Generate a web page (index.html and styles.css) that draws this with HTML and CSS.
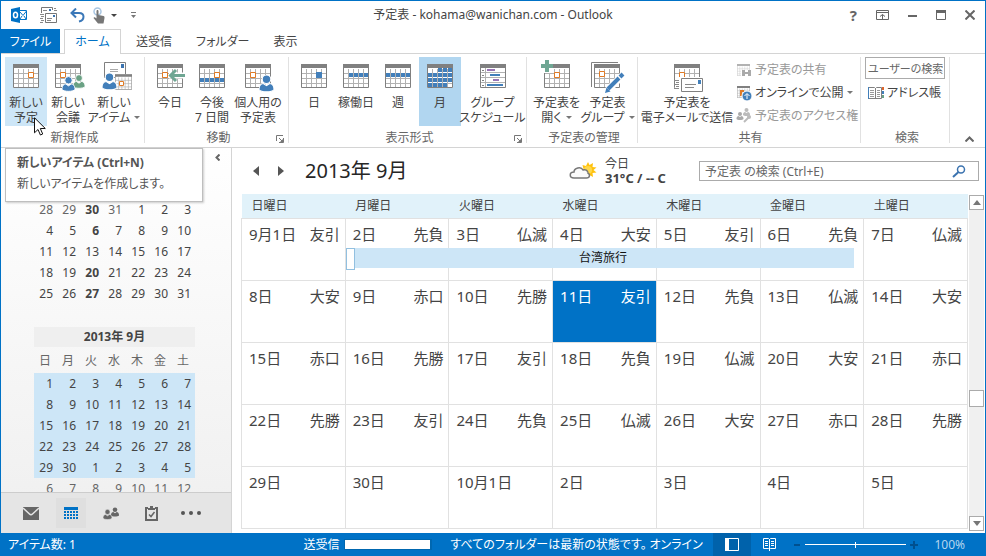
FILE: index.html
```html
<!DOCTYPE html>
<html lang="ja">
<head>
<meta charset="utf-8">
<title>予定表 - Outlook</title>
<link rel="stylesheet" href="styles.css">
</head>
<body>
<svg class="defs" aria-hidden="true">
  <symbol id="cal" viewBox="0 0 26 24">
    <path fill="#fff" d="M0 0h26v24H0z"/>
    <path stroke="#b1b1b1" fill="none" d="M5.5 5v18M10.5 5v18M15.5 5v18M20.5 5v18M1 9.5h24M1 14.5h24M1 19.5h24"/>
    <path stroke="#808080" fill="none" d="M.5 3v20.500h25V3"/>
    <path fill="#808080" d="M0 0h26v4H0z"/>
  </symbol>
  <symbol id="person" viewBox="0 0 14 16">
    <circle cx="7" cy="4" r="4"/><path d="M0 13c0-3 2-5 4-5l3 2 3-2c2 0 4 2 4 5v1c-2 2.500-12 2.500-14 0z"/>
  </symbol>
  <symbol id="launch" viewBox="0 0 8 8">
    <path fill="none" stroke="#777" d="M.5 6V.5H7M3 3l3 3M7.500 3v4.500H3"/><path fill="#777" d="M7 4v3H4z"/>
  </symbol>
</svg>
<div class="window">
  <header class="titlebar">
    <div class="quick">
      <svg width="16" height="16" viewBox="0 0 16 16"><path fill="#fff" stroke="#0072c6" d="M8 3.500h7.500v9H8"/><path fill="none" stroke="#0072c6" d="M9 5l3 3.500L15.500 4M9 12l2-3M15 12l-2-3"/><path fill="#0072c6" d="M0 2l9-2v16l-9-2z"/><ellipse cx="4.500" cy="8" rx="2" ry="2.800" fill="none" stroke="#fff" stroke-width="1.500"/></svg>
      <button class="plain" aria-label="すべてのフォルダーを送受信"><svg width="17" height="17" viewBox="0 0 17 17"><path fill="#fff" stroke="#777" d="M1.500 6V.5h11V3M5.500 6.500h11v9h-11z"/><path stroke="#888" d="M3 3.500h4M0 7.500h4M1 9.500h3M0 11.500h3M1 13.500h3M0 15.500h3M14 1.500h2M14 3.500h3M7 11.500h5M7 13.500h4"/><path fill="#3b73af" d="M9 2h2v2H9zM13 8h2v2h-2z"/></svg></button>
      <button class="plain" aria-label="元に戻す"><svg width="15" height="15" viewBox="0 0 15 15"><path fill="none" stroke="#3b78b8" stroke-width="2" d="M1.500 5H9c6 0 6 7 0 8.500M6 .5L1.500 5 6 9.500"/></svg></button>
      <button class="plain touch" aria-label="タッチ/マウス モードの切り替え"><svg width="13" height="17" viewBox="0 0 13 17"><circle cx="4.500" cy="4.500" r="3.500" fill="none" stroke="#a9c6e2" stroke-width="1.500"/><path fill="#777" d="M3.500 4c0-1.500 2-1.500 2 0v4l5 1c1 .3 1 1 1 2l-1 5.500H5L.5 11c.5-1.500 2-.5 3 .5z"/></svg><i class="caret dark"></i></button>
      <button class="plain custom" aria-label="クイック アクセス ツール バーのカスタマイズ"><svg width="5" height="6" viewBox="0 0 5 6"><path fill="#777" d="M0 0h5v1H0zM0 3h5L2.500 6z"/></svg></button>
    </div>
    <h1>予定表 - kohama@wanichan.com - Outlook</h1>
    <div class="winbtns">
      <button class="plain help" aria-label="ヘルプ">?</button>
      <button class="plain" aria-label="リボンの表示オプション"><svg width="13" height="10" viewBox="0 0 13 10"><path fill="none" stroke="#666" d="M.5.5h12v9H.500zM1 2.500h11M6.500 9V4.500M4 6.500l2.500-2L9 6.500"/></svg></button>
      <button class="plain" aria-label="最小化"><svg width="9" height="10" viewBox="0 0 9 10"><path fill="#666" d="M0 5h9v2H0z"/></svg></button>
      <button class="plain" aria-label="最大化"><svg width="10" height="10" viewBox="0 0 10 10"><path fill="none" stroke="#666" d="M.5 1v8.500h9V1"/><path fill="#666" d="M0 0h10v3H0z"/></svg></button>
      <button class="plain" aria-label="閉じる"><svg width="10" height="10" viewBox="0 0 10 10"><path stroke="#666" stroke-width="2" d="M.5.5l9 9M9.500.5l-9 9"/></svg></button>
    </div>
  </header>

  <nav class="tabs">
    <button class="tab file">ファイル</button>
    <button class="tab active">ホーム</button>
    <button class="tab">送受信</button>
    <button class="tab">フォルダー</button>
    <button class="tab">表示</button>
  </nav>

  <section class="ribbon">
    <div class="group g-new">
      <div class="tools">
        <button class="big hover"><svg width="38" height="34"><use href="#cal" x="6" y="4" width="26" height="24"/><path fill="#fff" stroke="#e07b26" d="M21.500 12.500h5v5h-5z"/></svg><span>新しい<br>予定</span></button>
        <button class="big"><svg width="38" height="34"><use href="#cal" x="6" y="4" width="26" height="24"/><path fill="#fff" stroke="#e07b26" d="M11.500 12.500h5v5h-5z"/><g stroke="#fff" stroke-width="1"><use href="#person" x="24" y="14" width="12" height="15" fill="#6aa184"/><use href="#person" x="13" y="16" width="13" height="16" fill="#427fba"/></g></svg><span>新しい<br>会議</span></button>
        <button class="big item"><svg width="38" height="34"><path fill="#fff" stroke="#808080" d="M9.500 2.500h21v15h-21z"/><path fill="#3b73af" d="M26 4h3v4h-3z"/><path stroke="#aaa" d="M15 9.500h8M15 11.500h8"/><use href="#cal" x="20" y="14" width="17" height="16"/><path fill="#fff" stroke="#e07b26" d="M24.500 21.500h4v4h-4z"/><use href="#person" x="7" y="13" width="15" height="17" fill="#427fba" stroke="#fff"/></svg><span>新しい<br>アイテム<i class="caret"></i></span></button>
      </div>
      <h2>新規作成</h2>
    </div>
    <div class="group g-move">
      <div class="tools">
        <button class="big"><svg width="38" height="34"><use href="#cal" x="6" y="4" width="26" height="24"/><path fill="#fff" stroke="#e07b26" d="M11.500 12.500h5v5h-5z"/><path stroke="#fff" stroke-width="6" d="M18 15.500h17"/><path fill="none" stroke="#6fa693" stroke-width="3" d="M34 15.500H20M25 10l-5.500 5.500L25 21"/></svg><span>今日</span></button>
        <button class="big"><svg width="38" height="34"><use href="#cal" x="6" y="4" width="26" height="24"/><path fill="#fff" stroke="#e07b26" d="M21.500 12.500h5v5h-5z"/><path stroke="#427fba" stroke-width="4" stroke-dasharray="4 1" d="M7 20h25"/></svg><span>今後<br>7 日間</span></button>
        <button class="big own"><svg width="38" height="34"><use href="#cal" x="6" y="4" width="26" height="24"/><path fill="#fff" stroke="#e07b26" d="M11.500 12.500h5v5h-5z"/><use href="#person" x="20" y="15" width="15" height="17" fill="#427fba" stroke="#fff"/></svg><span>個人用の<br>予定表</span></button>
      </div>
      <h2>移動</h2>
      <button class="plain launcher" aria-label="移動の詳細"><svg width="8" height="8"><use href="#launch"/></svg></button>
    </div>
    <div class="group g-view">
      <div class="tools">
        <button class="big"><svg width="38" height="34"><use href="#cal" x="6" y="4" width="26" height="24"/><path fill="#427fba" d="M21 12h6v6h-6z"/></svg><span>日</span></button>
        <button class="big"><svg width="38" height="34"><use href="#cal" x="6" y="4" width="26" height="24"/><path stroke="#427fba" stroke-width="4" stroke-dasharray="4 1" d="M12 15h19"/></svg><span>稼働日</span></button>
        <button class="big"><svg width="38" height="34"><use href="#cal" x="6" y="4" width="26" height="24"/><path stroke="#427fba" stroke-width="4" stroke-dasharray="4 1" d="M7 15h24"/></svg><span>週</span></button>
        <button class="big on"><svg width="38" height="34"><use href="#cal" x="6" y="4" width="26" height="24"/><path stroke="#427fba" stroke-width="4" stroke-dasharray="4 1" d="M17 10h14M7 15h24M7 20h24M7 25h19"/></svg><span>月</span></button>
        <button class="big sched"><svg width="38" height="34"><path fill="#fff" stroke="#808080" d="M6.500 5v22.500h25V5"/><path fill="#808080" d="M6 4h26v4H6z"/><path stroke="#b1b1b1" d="M11.500 8v19M7 12.500h24M7 17.500h24M7 22.500h24"/><path stroke="#808080" d="M8 10.500h2M8 15.500h2M8 20.500h2M8 25.500h2"/><path stroke="#9873b5" stroke-width="2" d="M13 10h8M19 20h6"/><path stroke="#427fba" stroke-width="2" d="M16 15h10M13 25h16"/></svg><span>グループ<br>スケジュール</span></button>
      </div>
      <h2>表示形式</h2>
      <button class="plain launcher" aria-label="表示形式の詳細"><svg width="8" height="8"><use href="#launch"/></svg></button>
    </div>
    <div class="group g-manage">
      <div class="tools">
        <button class="big wide"><svg width="38" height="34"><use href="#cal" x="6" y="4" width="26" height="24"/><path fill="#fff" stroke="#e07b26" d="M16.500 12.500h5v5h-5z"/><path stroke="#fff" stroke-width="6" d="M9 0v13M2 6h13"/><path stroke="#6fa693" stroke-width="4" d="M9 0v12M3 6h12"/></svg><span>予定表を<br>開く<i class="caret"></i></span></button>
        <button class="big wide"><svg width="38" height="34"><path fill="none" stroke="#808080" d="M2.500 27V2.500H29"/><use href="#cal" x="5" y="4" width="26" height="24"/><path fill="#fff" stroke="#e07b26" d="M10.500 11.500h5v5h-5z"/><path stroke="#fff" stroke-width="7" d="M19 30l15-15"/><path stroke="#427fba" stroke-width="4" d="M19 29l11-11M31 17l3-3"/><path fill="#427fba" d="M16 33l1.500-5.500 4 4z"/></svg><span>予定表<br>グループ<i class="caret"></i></span></button>
      </div>
      <h2>予定表の管理</h2>
    </div>
    <div class="group g-share">
      <div class="tools">
        <button class="big mail"><svg width="38" height="34"><use href="#cal" x="6" y="4" width="26" height="24"/><path fill="#fff" stroke="#e07b26" d="M11.500 12.500h5v5h-5z"/><path fill="#fff" d="M7 17h27v14H7z"/><path stroke="#888" d="M6 20.500h5M8 22.500h3M6 24.500h5M8 26.500h3M6 28.500h5M17 24.500h11M17 27.500h9"/><path fill="none" stroke="#808080" d="M13.500 18.500h21v13h-21z"/><path fill="#427fba" d="M30 20h3v4h-3z"/></svg><span>予定表を<br>電子メールで送信</span></button>
        <div class="stack">
          <button class="small" disabled><svg width="16" height="16"><use href="#cal" x="1" y="2" width="13" height="12" opacity=".6"/><path fill="#fff" d="M5 8h11v8H5z"/><path fill="none" stroke="#aaa" stroke-width="2" d="M9 9H7v4h2M12 9h2v4h-2M8 11h5"/></svg><span>予定表の共有</span></button>
          <button class="small"><svg width="16" height="16"><use href="#cal" x="1" y="1" width="13" height="12"/><path fill="none" stroke="#e07b26" stroke-width="2" d="M8 6H5v4h3"/><circle cx="11" cy="11" r="5" fill="#427fba" stroke="#fff"/><path fill="none" stroke="#fff" d="M11 14V9M8.500 11L11 8.500l2.500 2.500"/></svg><span>オンラインで公開<i class="caret"></i></span></button>
          <button class="small" disabled><svg width="16" height="16"><use href="#person" x="0" y="4" width="8" height="8" fill="#aaa"/><use href="#person" x="7" y="0" width="7" height="8" fill="#bbb"/><path fill="none" stroke="#bbb" stroke-width="2" d="M8 14l6-6"/><circle cx="13" cy="9" r="2" fill="#bbb"/></svg><span>予定表のアクセス権</span></button>
        </div>
      </div>
      <h2>共有</h2>
    </div>
    <div class="group g-find">
      <div class="tools finders">
        <input class="people" type="text" aria-label="ユーザーの検索" placeholder="ユーザーの検索">
        <button class="small"><svg width="16" height="14" viewBox="0 0 16 14"><path fill="#fff" stroke="#808080" d="M.5 1.500h6l1 1 1-1h5v11h-13zM7.500 2v11"/><path stroke="#999" d="M2 4.500h4M2 6.500h4M2 8.500h4M2 10.500h4M9 4.500h3M9 6.500h3M9 8.500h3M9 10.500h3"/><path fill="#427fba" d="M0 1h1v12H0zM14 5h2v3h-2z"/><path fill="#e0662c" d="M14 1h2v3h-2z"/><path fill="#6aa184" d="M14 9h2v3h-2z"/></svg><span>アドレス帳</span></button>
      </div>
      <h2>検索</h2>
    </div>
    <button class="plain collapse" aria-label="リボンを折りたたむ"><svg width="9" height="6" viewBox="0 0 9 6"><path fill="none" stroke="#666" stroke-width="2" d="M.5 5.500l4-4 4 4"/></svg></button>
  </section>

  <main class="body">
    <aside class="side">
      <button class="plain fold" aria-label="フォルダー ウィンドウの最小化"><svg width="5" height="7" viewBox="0 0 5 7"><path fill="none" stroke="#666" stroke-width="2" d="M4.500.5l-3 3 3 3"/></svg></button>
      <div class="minis">
        <table class="mini">
          <tbody>
            <tr><td class="out">28</td><td class="out">29</td><td><b>30</b></td><td class="out">31</td><td>1</td><td>2</td><td>3</td></tr>
            <tr><td>4</td><td>5</td><td><b>6</b></td><td>7</td><td>8</td><td>9</td><td>10</td></tr>
            <tr><td>11</td><td>12</td><td>13</td><td>14</td><td>15</td><td>16</td><td>17</td></tr>
            <tr><td>18</td><td>19</td><td><b>20</b></td><td>21</td><td>22</td><td>23</td><td>24</td></tr>
            <tr><td>25</td><td>26</td><td><b>27</b></td><td>28</td><td>29</td><td>30</td><td>31</td></tr>
          </tbody>
        </table>
        <table class="mini">
          <caption>2013年 9月</caption>
          <thead><tr><th>日</th><th>月</th><th>火</th><th>水</th><th>木</th><th>金</th><th>土</th></tr></thead>
          <tbody class="picked">
            <tr><td>1</td><td>2</td><td>3</td><td>4</td><td>5</td><td>6</td><td>7</td></tr>
            <tr><td>8</td><td>9</td><td>10</td><td>11</td><td>12</td><td>13</td><td>14</td></tr>
            <tr><td>15</td><td>16</td><td>17</td><td>18</td><td>19</td><td>20</td><td>21</td></tr>
            <tr><td>22</td><td>23</td><td>24</td><td>25</td><td>26</td><td>27</td><td>28</td></tr>
            <tr><td>29</td><td>30</td><td>1</td><td>2</td><td>3</td><td>4</td><td>5</td></tr>
          </tbody>
          <tbody>
            <tr class="out"><td>6</td><td>7</td><td>8</td><td>9</td><td>10</td><td>11</td><td>12</td></tr>
          </tbody>
        </table>
      </div>
      <nav class="modules">
        <button class="plain" aria-label="メール"><svg width="16" height="13" viewBox="0 0 16 13"><path fill="#666" d="M0 0h16v13H0z"/><path fill="none" stroke="#e5e5e5" stroke-width="1.500" d="M0 1l6.500 6c1 1 2 1 3 0L16 1"/></svg></button>
        <button class="plain current" aria-label="予定表"><svg width="14" height="13" viewBox="0 0 14 13"><path fill="#0072c6" d="M0 0h14v3H0z"/><path stroke="#0072c6" stroke-width="2" stroke-dasharray="2 1" d="M0 5h14M0 8h14M0 11h14"/></svg></button>
        <button class="plain" aria-label="連絡先"><svg width="16" height="13" viewBox="0 0 16 13"><use href="#person" x="8" y="0" width="8" height="10" fill="#666"/><use href="#person" x="0" y="2" width="9" height="11" fill="#666" stroke="#e5e5e5"/></svg></button>
        <button class="plain" aria-label="タスク"><svg width="13" height="15" viewBox="0 0 13 15"><path fill="none" stroke="#666" stroke-width="2" d="M3 2H1v12h11V2h-2"/><path fill="#666" d="M3 2h2V0h3v2h2v2H3z"/><path fill="none" stroke="#666" stroke-width="1.500" d="M4 8.500l2 2L9.500 6"/></svg></button>
        <button class="plain" aria-label="その他"><svg width="20" height="4" viewBox="0 0 20 4"><g fill="#555"><circle cx="2" cy="2" r="2"/><circle cx="10" cy="2" r="2"/><circle cx="18" cy="2" r="2"/></g></svg></button>
      </nav>
    </aside>

    <section class="calendar">
      <div class="calhead">
        <button class="plain" aria-label="前の月"><svg width="6" height="10" viewBox="0 0 6 10"><path fill="#555" d="M6 0v10L0 5z"/></svg></button>
        <button class="plain next" aria-label="次の月"><svg width="6" height="10" viewBox="0 0 6 10"><path fill="#555" d="M0 0v10l6-5z"/></svg></button>
        <h2>2013年 9月</h2>
        <div class="weather">
          <svg width="28" height="20" viewBox="0 0 28 20"><path fill="#ffc20e" d="M19 1l1.500 3L24 2l-.5 4 4 .5-3 2.500 3 2.500-4 .500.500 4-3.500-2-3 3-2-4-5-4 4-1-1-4 3.500 1z"/><circle cx="19" cy="9" r="4" fill="#ffd84a"/><path fill="#fafafa" stroke="#777" stroke-width="1.500" d="M5 17c-5 0-5-6 0-6 0-4 7-6 9-2 5-1 5 3 4.500 3 3 1 2.500 5-1 5z"/></svg>
          <div><span>今日</span><b>31°C / -- C</b></div>
        </div>
        <div class="search">
          <input type="text" aria-label="予定表の検索" placeholder="予定表 の検索 (Ctrl+E)">
          <button class="plain" aria-label="検索"><svg width="14" height="13" viewBox="0 0 14 13"><circle cx="9" cy="4.500" r="3.500" fill="none" stroke="#3b73af" stroke-width="1.500"/><path stroke="#3b73af" stroke-width="2" d="M6.500 7L1 12"/></svg></button>
        </div>
      </div>
      <div class="grid">
        <div class="monthbox">
        <table class="month">
          <thead><tr><th>日曜日</th><th>月曜日</th><th>火曜日</th><th>水曜日</th><th>木曜日</th><th>金曜日</th><th>土曜日</th></tr></thead>
          <tbody>
            <tr>
              <td><div class="day"><span>9月1日</span><span>友引</span></div></td>
              <td><div class="day"><span>2日</span><span>先負</span><a class="event" href="#">台湾旅行</a></div></td>
              <td><div class="day"><span>3日</span><span>仏滅</span></div></td>
              <td><div class="day"><span>4日</span><span>大安</span></div></td>
              <td><div class="day"><span>5日</span><span>友引</span></div></td>
              <td><div class="day"><span>6日</span><span>先負</span></div></td>
              <td><div class="day"><span>7日</span><span>仏滅</span></div></td>
            </tr>
            <tr>
              <td><div class="day"><span>8日</span><span>大安</span></div></td>
              <td><div class="day"><span>9日</span><span>赤口</span></div></td>
              <td><div class="day"><span>10日</span><span>先勝</span></div></td>
              <td class="today"><div class="day"><span>11日</span><span>友引</span></div></td>
              <td><div class="day"><span>12日</span><span>先負</span></div></td>
              <td><div class="day"><span>13日</span><span>仏滅</span></div></td>
              <td><div class="day"><span>14日</span><span>大安</span></div></td>
            </tr>
            <tr>
              <td><div class="day"><span>15日</span><span>赤口</span></div></td>
              <td><div class="day"><span>16日</span><span>先勝</span></div></td>
              <td><div class="day"><span>17日</span><span>友引</span></div></td>
              <td><div class="day"><span>18日</span><span>先負</span></div></td>
              <td><div class="day"><span>19日</span><span>仏滅</span></div></td>
              <td><div class="day"><span>20日</span><span>大安</span></div></td>
              <td><div class="day"><span>21日</span><span>赤口</span></div></td>
            </tr>
            <tr>
              <td><div class="day"><span>22日</span><span>先勝</span></div></td>
              <td><div class="day"><span>23日</span><span>友引</span></div></td>
              <td><div class="day"><span>24日</span><span>先負</span></div></td>
              <td><div class="day"><span>25日</span><span>仏滅</span></div></td>
              <td><div class="day"><span>26日</span><span>大安</span></div></td>
              <td><div class="day"><span>27日</span><span>赤口</span></div></td>
              <td><div class="day"><span>28日</span><span>先勝</span></div></td>
            </tr>
            <tr>
              <td><div class="day"><span>29日</span></div></td>
              <td><div class="day"><span>30日</span></div></td>
              <td><div class="day"><span>10月1日</span></div></td>
              <td><div class="day"><span>2日</span></div></td>
              <td><div class="day"><span>3日</span></div></td>
              <td><div class="day"><span>4日</span></div></td>
              <td><div class="day"><span>5日</span></div></td>
            </tr>
          </tbody>
        </table>
        </div>
        <div class="scroll">
          <button class="plain sb" aria-label="上へ"><svg width="8" height="5" viewBox="0 0 8 5"><path fill="#777" d="M0 5l4-5 4 5z"/></svg></button>
          <div class="track"><span class="thumb"></span></div>
          <button class="plain sb" aria-label="下へ"><svg width="8" height="5" viewBox="0 0 8 5"><path fill="#777" d="M0 0l4 5 4-5z"/></svg></button>
        </div>
      </div>
    </section>
  </main>

  <footer class="status">
    <span class="count">アイテム数: 1</span>
    <label for="sync">送受信</label>
    <progress id="sync" max="100" value="98"></progress>
    <span class="msg">すべてのフォルダーは最新の状態です。</span>
    <span class="net">オンライン</span>
    <button class="plain view on" aria-label="標準"><svg width="14" height="13" viewBox="0 0 14 13"><path fill="none" stroke="#fff" d="M.5.500h13v12H.500z"/><path fill="#fff" d="M0 0h4v13H0z"/></svg></button>
    <button class="plain view read" aria-label="閲覧"><svg width="13" height="13" viewBox="0 0 13 13"><path fill="none" stroke="#fff" d="M.5.500h5l1 1 1-1h5v10h-5l-1 1-1-1h-5zM6.500 1v12M2 3.500h3M2 5.500h3M2 7.500h3M8 3.500h3M8 5.500h3M8 7.500h3"/></svg></button>
    <button class="plain step" aria-label="縮小"><svg width="8" height="8"><path fill="#00508f" d="M1 3h6v2H1z"/></svg></button>
    <input class="zoom" type="range" min="0" max="200" value="100" aria-label="ズーム">
    <button class="plain step" aria-label="拡大"><svg width="8" height="8"><path fill="#00508f" d="M0 3h8v2H0zM3 0h2v8H3z"/></svg></button>
    <span class="pct">100%</span>
  </footer>

  <div class="tooltip" role="tooltip"><b>新しいアイテム (Ctrl+N)</b><span>新しいアイテムを作成します。</span></div>
  <svg class="cursor" width="12" height="19" viewBox="0 0 12 19"><path fill="#fff" stroke="#111" d="M.5.800v15l3.500-3.300 2.400 5.500 2.300-1-2.400-5.500h5z"/></svg>
</div>
</body>
</html>
```

FILE: styles.css
```css
* { box-sizing: border-box; }
html, body { height: 100%; margin: 0; }
body {
  font: 12px/16px "Noto Sans", "Noto Sans CJK JP", sans-serif;
  font-feature-settings: "palt";
  color: #444;
  background: #fff;
}
button, input { font: inherit; font-feature-settings: inherit; color: inherit; border: 0; background: none; padding: 0; margin: 0; }
h1, h2 { margin: 0; font-size: 12px; font-weight: 400; }
svg { display: block; flex: none; }
.defs { position: absolute; width: 0; height: 0; }
.plain { display: flex; align-items: center; justify-content: center; }
.window {
  position: relative;
  display: flex;
  flex-direction: column;
  height: 100%;
  border: 1px solid #0072c6;
  border-bottom: 0;
  overflow: hidden;
}
.caret { display: inline-block; border: 3px solid transparent; border-top-color: #777; border-bottom: 0; margin: 0 0 3px 4px; }
.caret.dark { border-top-color: #444; margin: 0 0 0 5px; }

.titlebar { display: grid; grid-template-columns: 1fr auto 1fr; align-items: center; height: 28px; flex: none; }
.quick { display: flex; align-items: center; gap: 13px; padding-left: 10px; }
.quick .touch { margin-left: -5px; }
.custom { margin-left: 1px; }
.winbtns { display: flex; align-items: center; justify-content: flex-end; gap: 19px; padding-right: 10px; }
.help { font-size: 15px; font-weight: 700; color: #666; }

.tabs { display: flex; height: 25px; flex: none; border-bottom: 1px solid #d4d4d4; }
.tab { padding: 1px 12px 0; }
.tab.file { width: 59px; padding: 1px 0 0; background: #0072c6; color: #fff; margin-right: 4px; }
.tab.active { width: 57px; height: 25px; padding: 0; border: 1px solid #d4d4d4; border-bottom: 0; background: #fff; color: #0072c6; margin-right: 3px; }

.ribbon { display: flex; height: 94px; flex: none; padding: 3px 0 4px; border-bottom: 1px solid #d4d4d4; }
.group { position: relative; display: flex; flex-direction: column; flex: none; border-right: 1px solid #e1e1e1; }
.group h2 { height: 16px; text-align: center; color: #666; line-height: 22px; }
.tools { display: flex; height: 70px; }
.big { display: flex; flex-direction: column; align-items: center; gap: 1px; width: 42px; height: 69px; padding-top: 3px; line-height: 15px; white-space: nowrap; text-align: center; }
.big.hover { background: #cde6f7; }
.big.on { background: #b1d6f0; }
.big.item { width: 50px; }
.big.own { width: 50px; }
.big.sched { width: 63px; }
.big.wide { width: 51px; }
.big.mail { width: 92px; }
.g-new { width: 144px; padding-left: 4px; }
.g-move { width: 144px; padding-left: 4px; }
.g-view { width: 238px; padding-left: 4px; }
.g-manage { width: 111px; padding-left: 4px; }
.g-share { width: 223px; padding-left: 3px; }
.g-find { width: 89px; padding-left: 4px; }
.launcher { position: absolute; right: 4px; bottom: 0; }
.stack { display: flex; flex-direction: column; padding: 1px 0 0 3px; }
.small { display: flex; align-items: center; gap: 3px; height: 23px; white-space: nowrap; }
.small:disabled { color: #999; }
.finders { flex-direction: column; }
.people { width: 80px; height: 22px; padding: 0 1px 0 2px; border: 1px solid #ababab; margin-bottom: 2px; font-size: 11px; }
.people::placeholder { color: #666; opacity: 1; }
.finders .small { padding-left: 3px; }
.collapse { margin: auto 11px 1px auto; }

.body { display: flex; flex: 1; min-height: 0; }
.side { position: relative; display: flex; flex-direction: column; width: 231px; flex: none; border-right: 1px solid #d4d4d4; background: linear-gradient(#fff, #efefef); }
.fold { position: absolute; right: 11px; top: 6px; }
.minis { flex: 1; min-height: 0; overflow: hidden; padding: 51px 0 0 33px; }
.mini { table-layout: fixed; width: 161px; border-collapse: collapse; margin-bottom: 23px; }
.mini td, .mini th { padding: 0 4px 0 0; height: 21px; text-align: right; font-weight: 400; line-height: 16px; }
.mini th { height: 26px; padding: 2px 6px 0 0; color: #666; }
.mini caption { height: 20px; padding: 2px 0; background: #efefef; font-weight: 700; }
.mini .out { color: #666; }
.picked { background: #cde6f7; }
.modules { display: flex; align-items: center; gap: 10px; height: 41px; flex: none; padding-left: 15px; border-top: 1px solid #ccc; background: #e5e5e5; }
.modules .plain { width: 30px; height: 30px; }
.modules .current { background: #dfdfdf; }

.calendar { display: flex; flex-direction: column; flex: 1; min-width: 0; padding: 0 1px 2px 9px; }
.calhead { display: flex; align-items: center; height: 46px; flex: none; padding: 0 5px 0 12px; }
.calhead .next { margin-left: 19px; }
.calhead h2 { margin-left: 21px; font-size: 20px; line-height: 28px; color: #262626; }
.weather { display: flex; align-items: center; gap: 8px; margin-left: auto; margin-right: 27px; line-height: 15px; }
.weather div { min-width: 67px; }
.weather span, .weather b { display: block; }
.weather b { font-size: 13px; }
.search { display: flex; align-items: center; width: 280px; height: 20px; padding: 0 12px 0 5px; border: 1px solid #ababab; }
.search input { flex: 1; min-width: 0; height: 18px; }
.search input::placeholder { color: #666; opacity: 1; }
.grid { display: flex; flex: 1; min-height: 0; }
.monthbox { flex: 1; min-width: 0; }
.month { width: 100%; table-layout: fixed; border-collapse: collapse; height: 335px; }
.month th { height: 24px; padding: 1px 0 0 10px; text-align: left; font-weight: 400; background: #e1f2fa; }
.month td { height: 62px; padding: 0; vertical-align: top; border: 1px solid #e1e1e1; }
.day { position: relative; display: flex; justify-content: space-between; padding: 5px 5px 0 7px; font-size: 15px; line-height: 20px; }
.month .today { background: #0072c6; color: #fff; }
.event { position: absolute; z-index: 1; left: 0; top: 29px; width: 495%; height: 20px; padding-left: 6px; background: #cde6f7; color: #111; font-size: 12px; text-align: center; text-decoration: none; }
.event::before { content: ""; position: absolute; left: 0; top: 0; width: 7px; height: 20px; background: #fff; border: 1px solid #92c0e0; }
.scroll { display: flex; flex-direction: column; width: 16px; flex: none; padding: 1px 0 0 1px; }
.sb { height: 15px; border: 1px solid #ababab; }
.track { flex: 1; display: flex; flex-direction: column; background: #f0f0f0; }
.track::before { content: ""; flex: 180; }
.track::after { content: ""; flex: 109; }
.thumb { height: 17px; border: 1px solid #ababab; background: #fff; }

.status { display: flex; align-items: center; height: 23px; flex: none; padding: 0 20px 0 7px; background: #0072c6; color: #fff; white-space: nowrap; }
.count { margin-right: auto; }
.status progress { appearance: none; width: 88px; height: 11px; margin: 0 18px 0 5px; border: 1px solid #0067b0; background: #0067b0; }
progress::-webkit-progress-bar { background: #0067b0; }
progress::-webkit-progress-value { background: #fff; }
.msg { width: 199px; }
.net { width: 64px; }
.view { width: 38px; height: 23px; }
.view.on { background: #0062ab; }
.view.read { width: 36px; }
.step { width: 8px; height: 12px; margin-left: 6px; }
.zoom { appearance: none; width: 101px; height: 12px; margin-left: 4px; background: linear-gradient(#fff, #fff) center / 100% 1px no-repeat; }
.zoom + .step { margin-left: 4px; }
.zoom::-webkit-slider-thumb { appearance: none; width: 1px; height: 6px; background: #fff; }
.pct { margin-left: 16px; color: #b5d5ee; }

.tooltip { position: absolute; left: 4px; top: 147px; width: 198px; height: 54px; padding: 6px 11px; border: 1px solid #bebebe; background: #fff; color: #555; box-shadow: 1px 1px 2px rgba(0, 0, 0, .2); }
.tooltip b, .tooltip span { display: block; margin-bottom: 5px; white-space: nowrap; }
.cursor { position: absolute; left: 33px; top: 116px; }
```
